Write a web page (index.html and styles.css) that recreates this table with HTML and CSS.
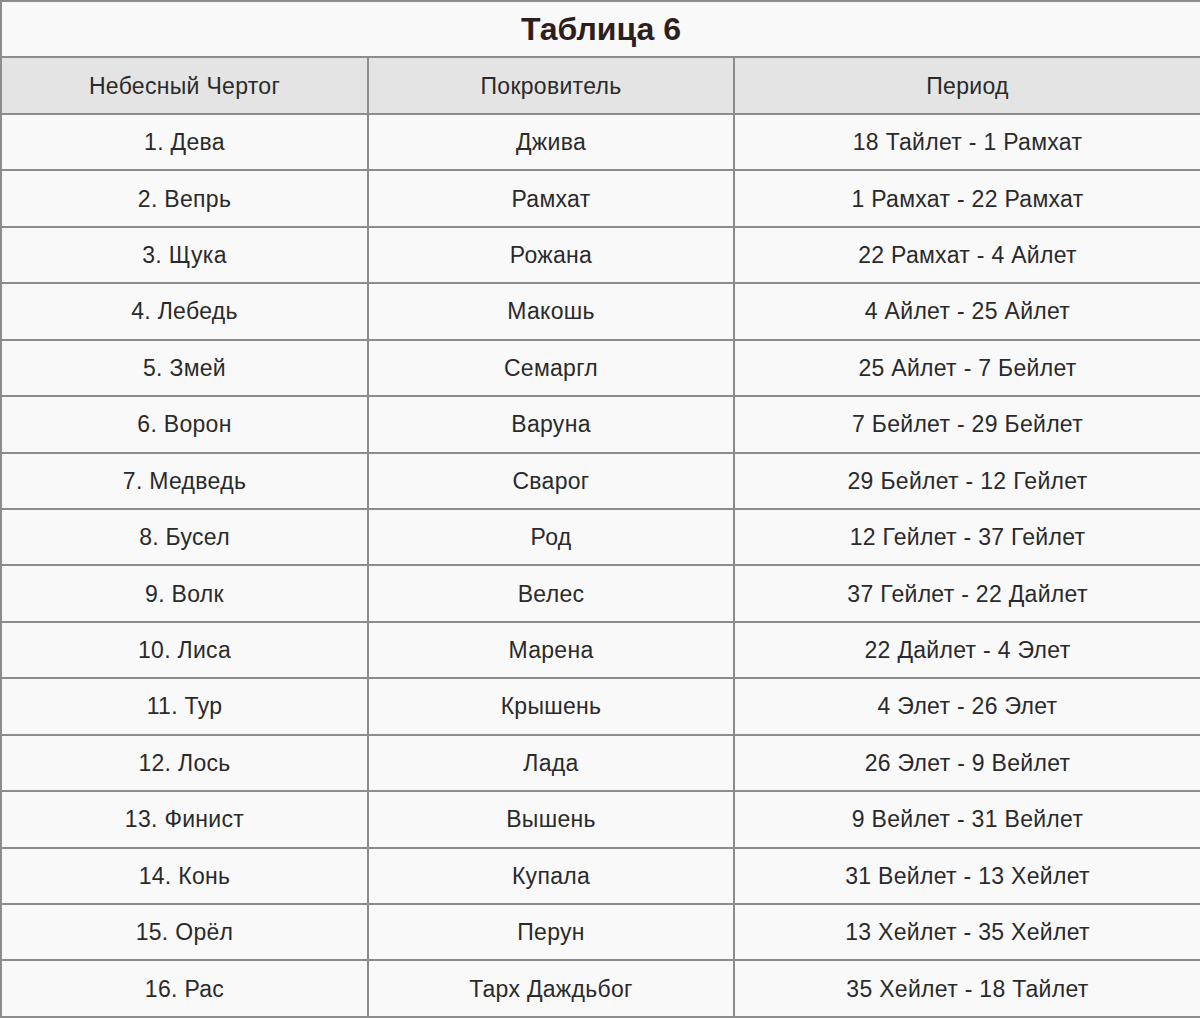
FILE: index.html
```html
<!DOCTYPE html>
<html lang="ru">
<head>
<meta charset="utf-8">
<title>Таблица 6</title>
<link rel="stylesheet" href="styles.css">
</head>
<body>
<table class="tbl">
  <colgroup>
    <col class="c1"><col class="c2"><col class="c3">
  </colgroup>
  <tr class="title-row"><td colspan="3">Таблица 6</td></tr>
  <tr class="head-row"><td>Небесный Чертог</td><td>Покровитель</td><td>Период</td></tr>
  <tr><td>1. Дева</td><td>Джива</td><td>18 Тайлет - 1 Рамхат</td></tr>
  <tr><td>2. Вепрь</td><td>Рамхат</td><td>1 Рамхат - 22 Рамхат</td></tr>
  <tr><td>3. Щука</td><td>Рожана</td><td>22 Рамхат - 4 Айлет</td></tr>
  <tr><td>4. Лебедь</td><td>Макошь</td><td>4 Айлет - 25 Айлет</td></tr>
  <tr><td>5. Змей</td><td>Семаргл</td><td>25 Айлет - 7 Бейлет</td></tr>
  <tr><td>6. Ворон</td><td>Варуна</td><td>7 Бейлет - 29 Бейлет</td></tr>
  <tr><td>7. Медведь</td><td>Сварог</td><td>29 Бейлет - 12 Гейлет</td></tr>
  <tr><td>8. Бусел</td><td>Род</td><td>12 Гейлет - 37 Гейлет</td></tr>
  <tr><td>9. Волк</td><td>Велес</td><td>37 Гейлет - 22 Дайлет</td></tr>
  <tr><td>10. Лиса</td><td>Марена</td><td>22 Дайлет - 4 Элет</td></tr>
  <tr><td>11. Тур</td><td>Крышень</td><td>4 Элет - 26 Элет</td></tr>
  <tr><td>12. Лось</td><td>Лада</td><td>26 Элет - 9 Вейлет</td></tr>
  <tr><td>13. Финист</td><td>Вышень</td><td>9 Вейлет - 31 Вейлет</td></tr>
  <tr><td>14. Конь</td><td>Купала</td><td>31 Вейлет - 13 Хейлет</td></tr>
  <tr><td>15. Орёл</td><td>Перун</td><td>13 Хейлет - 35 Хейлет</td></tr>
  <tr><td>16. Рас</td><td>Тарх Даждьбог</td><td>35 Хейлет - 18 Тайлет</td></tr>
</table>
</body>
</html>
```

FILE: styles.css
```css
html, body {
  margin: 0;
  padding: 0;
  background: #f9f9f9;
}
.tbl {
  width: 1200px;
  border-collapse: collapse;
  table-layout: fixed;
  font-family: "Liberation Sans", Arial, sans-serif;
  font-size: 23px;
  letter-spacing: 0.3px;
  color: #2a2a2a;
  background: #f9f9f9;
}
.c1 { width: 367px; }
.c2 { width: 366px; }
.c3 { width: 467px; }
.tbl tr {
  height: 56.45px;
}
.tbl td {
  border: 2px solid #8c8c8c;
  text-align: center;
  vertical-align: middle;
  padding: 0;
  line-height: 26px;
}
.title-row td {
  font-weight: bold;
  font-size: 32px;
  letter-spacing: 0;
  color: #2e1f1f;
}
.head-row td {
  background: #e4e4e4;
}
```
